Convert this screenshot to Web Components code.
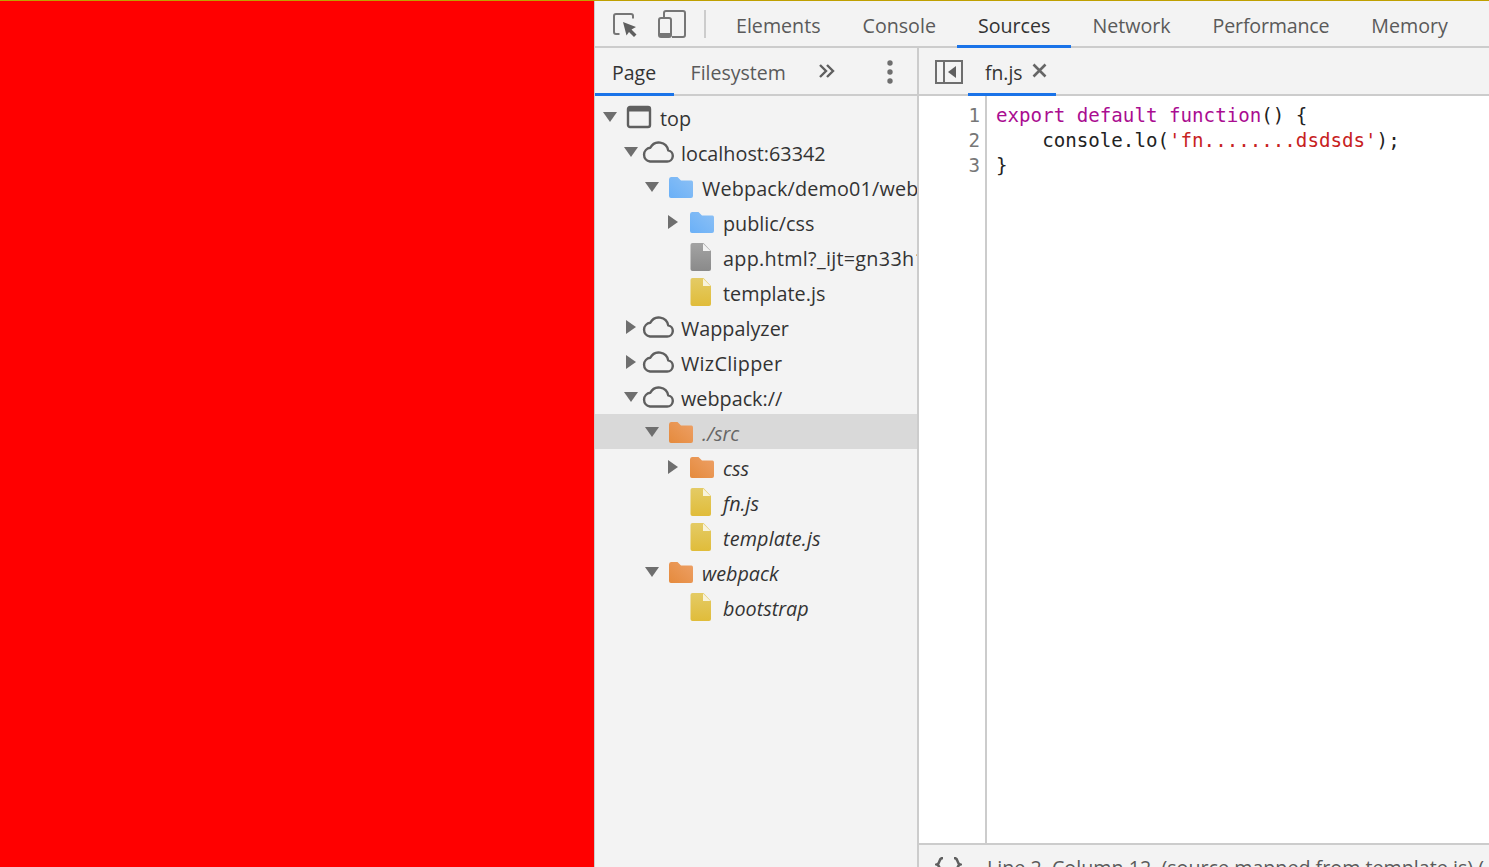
<!DOCTYPE html>
<html><head><meta charset="utf-8"><title>DevTools</title>
<style>
html,body{margin:0;padding:0;height:100%;overflow:hidden;background:#f3f3f3}
body{font-family:"Open Sans","Noto Sans",sans-serif}
</style></head><body>
<dt-app>
  <dt-main-tabs slot="top"></dt-main-tabs>
  <dt-navigator slot="left">
    <dt-row level="0" arrow="down" icon="window">top</dt-row>
    <dt-row level="1" arrow="down" icon="cloud">localhost:63342</dt-row>
    <dt-row level="2" arrow="down" icon="folder-blue" style="letter-spacing:.16px">Webpack/demo01/webpack</dt-row>
    <dt-row level="3" arrow="right" icon="folder-blue">public/css</dt-row>
    <dt-row level="3" icon="file-gray" style="letter-spacing:.28px">app.html?_ijt=gn33h1k</dt-row>
    <dt-row level="3" icon="file-yellow">template.js</dt-row>
    <dt-row level="1" arrow="right" icon="cloud">Wappalyzer</dt-row>
    <dt-row level="1" arrow="right" icon="cloud" style="letter-spacing:.3px">WizClipper</dt-row>
    <dt-row level="1" arrow="down" icon="cloud">webpack://</dt-row>
    <dt-row level="2" arrow="down" icon="folder-orange" italic selected>./src</dt-row>
    <dt-row level="3" arrow="right" icon="folder-orange" italic>css</dt-row>
    <dt-row level="3" icon="file-yellow" italic>fn.js</dt-row>
    <dt-row level="3" icon="file-yellow" italic style="letter-spacing:.15px">template.js</dt-row>
    <dt-row level="2" arrow="down" icon="folder-orange" italic>webpack</dt-row>
    <dt-row level="3" icon="file-yellow" italic>bootstrap</dt-row>
  </dt-navigator>
  <dt-editor slot="right"></dt-editor>
</dt-app>
<script>
const ICONS={
 'window':'<svg width="26" height="24" viewBox="0 0 26 24"><rect x="2" y="2" width="22" height="20" rx="2" fill="none" stroke="#5f5f5f" stroke-width="2.4"/><rect x="2" y="2" width="22" height="4.5" fill="#5f5f5f"/></svg>',
 'cloud':'<svg width="32" height="24" viewBox="0 0 32 24"><path d="M8 21.500h17a5.600 5.600 0 0 0 1.200-11.100A9.500 9.500 0 0 0 8.300 7.800 6.900 6.900 0 0 0 8 21.500z" fill="none" stroke="#5f5f5f" stroke-width="2.400" stroke-linejoin="round"/></svg>',
 'folder-blue':'<svg width="26" height="24" viewBox="0 0 26 24"><defs><linearGradient id="b" x1="0" y1="1" x2="1" y2="0"><stop offset="0" stop-color="#6ab0f7"/><stop offset="1" stop-color="#8cc0f5"/></linearGradient></defs><path d="M1 4.500Q1 2 3 2h6.500l3.500 3.500h10.500Q25 5.500 25 7.500v13.500Q25 23 23 23H3Q1 23 1 21z" fill="url(#b)"/></svg>',
 'folder-orange':'<svg width="26" height="24" viewBox="0 0 26 24"><defs><linearGradient id="o" x1="0" y1="1" x2="1" y2="0"><stop offset="0" stop-color="#e58a3c"/><stop offset="1" stop-color="#eda066"/></linearGradient></defs><path d="M1 4.500Q1 2 3 2h6.500l3.500 3.500h10.500Q25 5.500 25 7.500v13.500Q25 23 23 23H3Q1 23 1 21z" fill="url(#o)"/></svg>',
 'file-gray':'<svg width="22" height="28" viewBox="0 0 22 28"><defs><linearGradient id="g" x1="0" y1="0" x2="0" y2="1"><stop offset="0" stop-color="#a3a3a3"/><stop offset="1" stop-color="#8a8a8a"/></linearGradient></defs><path d="M2.500 0H13.500L21 8V26Q21 28 19 28H2.500Q.5 28 .5 26V2Q.5 0 2.500 0z" fill="url(#g)"/><path d="M13 .5V8H20.500z" fill="#f3f3f3"/></svg>',
 'file-yellow':'<svg width="22" height="28" viewBox="0 0 22 28"><defs><linearGradient id="y" x1="0" y1="0" x2="0" y2="1"><stop offset="0" stop-color="#e4cb65"/><stop offset="1" stop-color="#e0bc3a"/></linearGradient></defs><path d="M2.500 0H13.500L21 8V26Q21 28 19 28H2.500Q.5 28 .5 26V2Q.5 0 2.500 0z" fill="url(#y)"/><path d="M13 .5V8H20.500z" fill="#f8f3dc"/></svg>'
};
function def(name,html,extra){
  const t=document.createElement('template');t.innerHTML=html;
  customElements.define(name,class extends HTMLElement{
    constructor(){super();this.attachShadow({mode:'open'}).appendChild(t.content.cloneNode(true));}
    connectedCallback(){extra&&extra(this)}
  });
}
def('dt-app',`<style>
:host{display:grid;grid-template-columns:594px 1fr;grid-template-rows:1px 1fr;width:1489px;height:867px;overflow:hidden}
.gold{grid-column:1 / 3;background:#bfa000}
.red{background:#f00}
.dev{display:grid;grid-template-rows:47px 1fr;background:#f3f3f3;min-width:0;min-height:0;border-left:1px solid #ccc}
.split{display:grid;grid-template-columns:322px 2px 1fr;min-height:0;min-width:0;overflow:hidden}
.sep{background:#ccc}
</style><div class="gold"></div><div class="red"></div><div class="dev"><slot name="top"></slot><div class="split"><slot name="left"></slot><div class="sep"></div><slot name="right"></slot></div></div>`);

def('dt-tab',`<style>
:host{display:flex;align-items:center;box-sizing:border-box;padding:var(--tab-pad,0 21px);color:#5a5a5a;font-size:var(--tab-fs,19.500px);border-bottom:3px solid transparent;white-space:nowrap;padding-top:var(--tab-pt,4px)}
:host([active]){border-bottom-color:#1a73e8;color:#333}
</style><slot></slot>`);

def('dt-main-tabs',`<style>
:host{display:block;box-sizing:border-box;height:47px;margin-left:-1px;box-shadow:inset 0 -2px 0 #ccc}
.bar{display:flex;align-items:stretch;height:47px;padding-left:18px}
.ic{display:flex;align-items:center;flex:none;padding-bottom:1px}
.div{width:2px;height:28px;background:#ccc;align-self:center;margin:0 9px 2px 18px}
dt-tab{--tab-fs:19.650px}
</style><div class="bar">
<div class="ic" style="margin-right:20px"><svg width="26" height="26" viewBox="0 0 26 26"><path d="M7.500 23H4Q2 23 2 21V5Q2 3 4 3H19Q21 3 21 5V7.500" fill="none" stroke="#767676" stroke-width="2"/><path d="M11 11L24 16L19.500 18.500L24.500 23.500L22 26L17 21L14.500 24.500z" fill="#5f5f5f"/></svg></div>
<div class="ic"><svg width="28" height="28" viewBox="0 0 28 28"><path d="M6 8V3Q6 1 8 1H25Q27 1 27 3V25Q27 27 25 27H14" fill="none" stroke="#767676" stroke-width="2"/><rect x="1" y="8" width="12" height="19" rx="2" fill="none" stroke="#767676" stroke-width="2"/><rect x="1" y="23" width="12" height="4" fill="#767676"/></svg></div>
<div class="div"></div>
<dt-tab>Elements</dt-tab><dt-tab>Console</dt-tab><dt-tab active>Sources</dt-tab><dt-tab>Network</dt-tab><dt-tab style="letter-spacing:-.2px">Performance</dt-tab><dt-tab>Memory</dt-tab>
</div>`);

def('dt-navigator',`<style>
:host{display:grid;grid-template-rows:48px 1fr;min-height:0;min-width:0;overflow:hidden}
.tabs{display:flex;align-items:stretch;height:48px;box-sizing:border-box;box-shadow:inset 0 -2px 0 #ccc}
.more{display:flex;align-items:center;margin-left:15px;flex:none;padding-bottom:2px}
.dots{display:flex;align-items:center;margin-left:auto;margin-right:24px}
.tree{padding-top:3px;overflow:hidden;min-width:0}
dt-tab{--tab-pad:0 17.500px 0 17px;--tab-pt:3px}
</style><div class="tabs"><dt-tab active>Page</dt-tab><dt-tab>Filesystem</dt-tab>
<div class="more"><svg width="18" height="16" viewBox="0 0 18 16"><path d="M2 2l6 6-6 6M9 2l6 6-6 6" fill="none" stroke="#5f5f5f" stroke-width="2.400"/></svg></div>
<div class="dots"><svg width="6" height="24" viewBox="0 0 6 24"><circle cx="3" cy="3" r="2.700" fill="#6e6e6e"/><circle cx="3" cy="12" r="2.700" fill="#6e6e6e"/><circle cx="3" cy="21" r="2.700" fill="#6e6e6e"/></svg></div>
</div><div class="tree"><slot></slot></div>`);

def('dt-row',`<style>
:host{display:flex;align-items:center;height:35px;white-space:nowrap;overflow:hidden;color:#333;font-size:19.800px;padding-left:calc(var(--lv)*21px + 7px)}
:host([selected]){background:#d9d9d9;color:#666}
:host([italic]){font-style:italic}
.a{width:16px;flex:none;display:flex;justify-content:center;margin-top:1px}
.i{width:34px;margin-left:8px;flex:none;display:flex;align-items:center;margin-top:1px}
.t{padding-top:4px}
</style><span class="a"></span><span class="i"></span><span class="t"><slot></slot></span>`,el=>{
  el.style.setProperty('--lv',el.getAttribute('level')||0);
  const a=el.getAttribute('arrow');
  el.shadowRoot.querySelector('.a').innerHTML=a==='down'?'<svg width="14" height="10" viewBox="0 0 14 10"><path d="M0 0h14L7 10z" fill="#6e6e6e"/></svg>':a==='right'?'<svg width="10" height="14" viewBox="0 0 10 14"><path d="M0 0v14L10 7z" fill="#6e6e6e"/></svg>':'';
  const n=el.getAttribute('icon');const i=el.shadowRoot.querySelector('.i');i.innerHTML=ICONS[n]||'';
  if(n==='cloud')i.firstChild.style.marginLeft='-5px';
  if(n.startsWith('file'))i.firstChild.style.marginLeft='1px';
});

def('dt-editor',`<style>
:host{display:grid;grid-template-rows:48px 1fr 24px;min-width:0;min-height:0;overflow:hidden}
.tabs{display:flex;align-items:stretch;height:48px;box-sizing:border-box;box-shadow:inset 0 -2px 0 #ccc}
.toggle{display:flex;align-items:center;padding-left:16px;padding-right:5px;flex:none}
.close{margin-left:10px;display:flex;margin-top:-4px}
.status{display:flex;align-items:flex-start;border-top:2px solid #ccc;box-sizing:border-box;padding-left:16px;overflow:hidden;height:24px;color:#5a5a5a;font-size:19.700px;white-space:pre}
.status svg{margin-top:12px;flex:none}
.status span{margin-left:25px;margin-top:9px}
</style><div class="tabs"><div class="toggle"><svg width="28" height="26" viewBox="0 0 28 26"><rect x="1" y="2" width="26" height="22" fill="none" stroke="#6e6e6e" stroke-width="2"/><path d="M9 2v22" stroke="#6e6e6e" stroke-width="2"/><path d="M21 7v12l-8-6z" fill="#5f5f5f"/></svg></div>
<dt-tab active style="--tab-pad:0 9px 0 17px;--tab-pt:3px;--tab-fs:19.300px;color:#333">fn.js<span class="close"><svg width="15" height="15" viewBox="0 0 15 15"><path d="M1.500 1.500l12 12M13.500 1.500l-12 12" stroke="#666" stroke-width="2.600"/></svg></span></dt-tab></div>
<dt-code></dt-code>
<div class="status"><svg width="27" height="16" viewBox="0 0 27 16"><path d="M8 1C3 1 6 6 2 7.500C6 9 3 14 8 14M19 1C24 1 21 6 25 7.500C21 9 24 14 19 14" fill="none" stroke="#5f5f5f" stroke-width="2.600"/></svg><span>Line 2, Column 12  (source mapped from template.js) (</span></div>`);

def('dt-code',`<style>
:host{display:grid;grid-template-columns:66px 2px 1fr;background:#fff;font-family:"DejaVu Sans Mono","Liberation Mono",monospace;font-size:19.160px;min-height:0;overflow:hidden}
.g{color:#777;text-align:right;padding:7px 5px 0 0;line-height:25px}
.l{background:#ccc}
pre{margin:0;padding:7px 0 0 9px;font:inherit;line-height:25px;color:#222}
.k{color:#aa0d91}.s{color:#c7221f}
</style><div class="g">1<br>2<br>3</div><div class="l"></div><pre><span class="k">export default function</span>() {
    console.lo(<span class="s">'fn........dsdsds'</span>);
}</pre>`);
</script>
</body></html>
